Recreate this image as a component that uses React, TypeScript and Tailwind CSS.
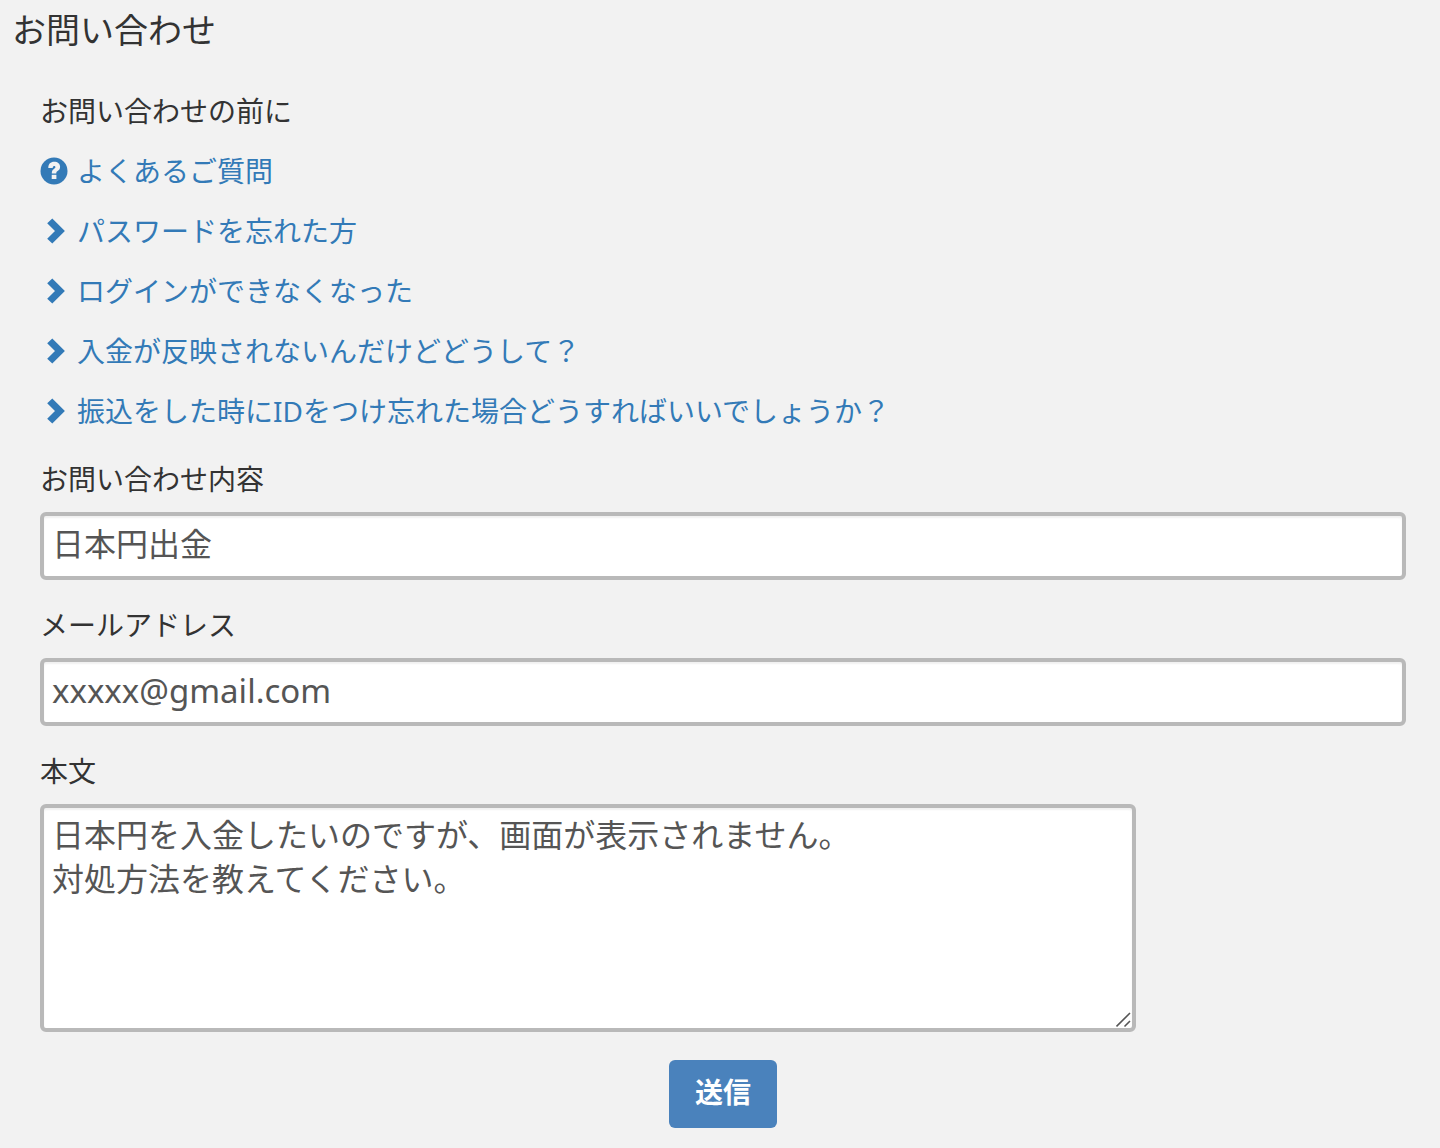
import { useState } from "react";

const links = [
  { label: "よくあるご質問", icon: "question" },
  { label: "パスワードを忘れた方", icon: "chevron" },
  { label: "ログインができなくなった", icon: "chevron" },
  { label: "入金が反映されないんだけどどうして？", icon: "chevron" },
  { label: "振込をした時にIDをつけ忘れた場合どうすればいいでしょうか？", icon: "chevron" },
];

function QuestionIcon() {
  return (
    <svg viewBox="0 0 28 28" className="h-7 w-7 shrink-0" aria-hidden="true">
      <circle cx="14" cy="14" r="13.5" fill="#337ab7" />
      <path
        d="M8.300 11C8.300 7 10.500 4.800 14.200 4.800c3.500 0 5.900 2 5.900 5 0 2.200-1.100 3.400-2.500 4.300-1.100.700-1.300 1.200-1.300 2.500h-4.500c0-2.500.500-3.600 2.200-4.700 1-.700 1.400-1.100 1.400-1.800 0-.700-.500-1.100-1.200-1.100-1 0-1.500.700-1.500 2z"
        fill="#f2f2f2"
      />
      <path d="M11.700 17.800h4.700v4.200h-4.700z" fill="#f2f2f2" />
    </svg>
  );
}

function ChevronIcon() {
  return (
    <svg viewBox="0 0 28 28" className="h-7 w-7 shrink-0" aria-hidden="true">
      <path d="M12.300 1.500 24.900 14 12.300 26.500 7.200 21.800 15 14 7.200 6.200z" fill="#337ab7" />
    </svg>
  );
}

const fieldClass =
  "block rounded-md border-4 border-[#b9b9b9] bg-white px-2 text-[#555] shadow-[inset_0_2px_2px_rgba(0,0,0,0.06)] outline-none";

export default function App() {
  const [subject, setSubject] = useState("日本円出金");
  const [email, setEmail] = useState("xxxxx@gmail.com");
  const [body, setBody] = useState(
    "日本円を入金したいのですが、画面が表示されません。\n対処方法を教えてください。"
  );

  return (
    <main className="min-h-screen bg-[#f2f2f2] pb-5 font-['Noto_Sans','Noto_Sans_CJK_JP',sans-serif] text-[28px] leading-10 text-[#333]">
      <h1 className="px-3 pt-[6px] text-[34px] leading-[48px]">お問い合わせ</h1>

      <div className="pt-[37px] pr-[34px] pl-10">
        <h2>お問い合わせの前に</h2>

        {/* FAQ links */}
        <ul className="mt-5 flex flex-col items-start gap-5">
          {links.map((link) => (
            <li key={link.label}>
              <a href="#" className="flex h-10 items-center gap-[9px] text-[#337ab7]">
                {link.icon === "question" ? <QuestionIcon /> : <ChevronIcon />}
                <span>{link.label}</span>
              </a>
            </li>
          ))}
        </ul>

        {/* Contact form */}
        <form onSubmit={(e) => e.preventDefault()} className="mt-7">
          <label htmlFor="subject" className="block">
            お問い合わせ内容
          </label>
          <input
            id="subject"
            type="text"
            value={subject}
            onChange={(e) => setSubject(e.target.value)}
            className={`${fieldClass} mt-[13px] h-[68px] w-full pb-2 text-[32px]`}
          />

          <label htmlFor="email" className="mt-[25px] block">
            メールアドレス
          </label>
          <input
            id="email"
            type="email"
            value={email}
            onChange={(e) => setEmail(e.target.value)}
            className={`${fieldClass} mt-[13px] h-[68px] w-full pb-1 text-[33px]`}
          />

          <label htmlFor="body" className="mt-[25px] block">
            本文
          </label>
          <div className="relative mt-[13px] w-[1096px] max-w-full">
            <textarea
              id="body"
              value={body}
              onChange={(e) => setBody(e.target.value)}
              className={`${fieldClass} h-[228px] w-full resize-none pt-[5px] text-[32px] leading-[44px]`}
            />
            <svg
              viewBox="0 0 16 16"
              className="pointer-events-none absolute right-1 bottom-1 h-4 w-4"
              aria-hidden="true"
            >
              <path d="M0.500 14.500 14 1M8.500 14.500 14 9" stroke="#555" strokeWidth="1.600" fill="none" />
            </svg>
          </div>

          <button
            type="submit"
            className="mx-auto mt-7 block h-[68px] w-[108px] rounded-md bg-[#4a82bc] pb-1 font-bold text-white"
          >
            送信
          </button>
        </form>
      </div>
    </main>
  );
}
